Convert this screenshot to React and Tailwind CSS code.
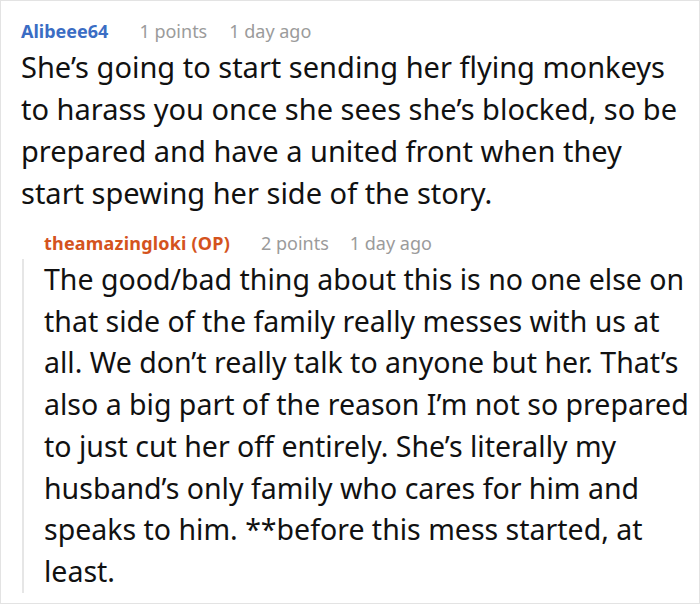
export default function App() {
  return (
    <div className="w-[700px] h-[604px] bg-white" style={{ fontFamily: '"Noto Sans", "Open Sans", sans-serif' }}>
      <div className="h-[604px] border border-[#e3e3e3] pl-5 pr-[2px] pt-[16px]">
        {/* Comment */}
        <div className="flex items-center text-[18px] leading-[28px]">
          <span className="font-bold text-[#3b6dc4]">Alibeee64</span>
          <span className="ml-[31px] text-[#9b9b9b]">1 points</span>
          <span className="ml-[22px] text-[#9b9b9b]">1 day ago</span>
        </div>
        <p className="mt-[1px] text-[29px] leading-[42px] text-[#111]">
          She’s going to start sending her flying monkeys<br />
          to harass you once she sees she’s blocked, so be<br />
          prepared and have a united front when they<br />
          start spewing her side of the story.
        </p>

        {/* Reply */}
        <div className="mt-[15px]">
          <div className="pl-[23px] flex items-center text-[18px] leading-[28px]">
            <span className="font-bold tracking-[0.2px] text-[#d4531d]">theamazingloki (OP)</span>
            <span className="ml-[31px] text-[#9b9b9b]">2 points</span>
            <span className="ml-[21px] text-[#9b9b9b]">1 day ago</span>
          </div>
          <p className="mt-[2px] ml-[1px] border-l-2 border-[#e6e6e6] pl-[20px] text-[28.5px] leading-[41.7px] text-[#111]">
            The good/bad thing about this is no one else on that side of the family really messes with us at all. We don’t really talk to anyone but her. That’s also a big part of the reason I’m not so prepared to just cut her off entirely. She’s literally my husband’s only family who cares for him and speaks to him. **before this mess started, at least.
          </p>
        </div>
      </div>
    </div>
  );
}
